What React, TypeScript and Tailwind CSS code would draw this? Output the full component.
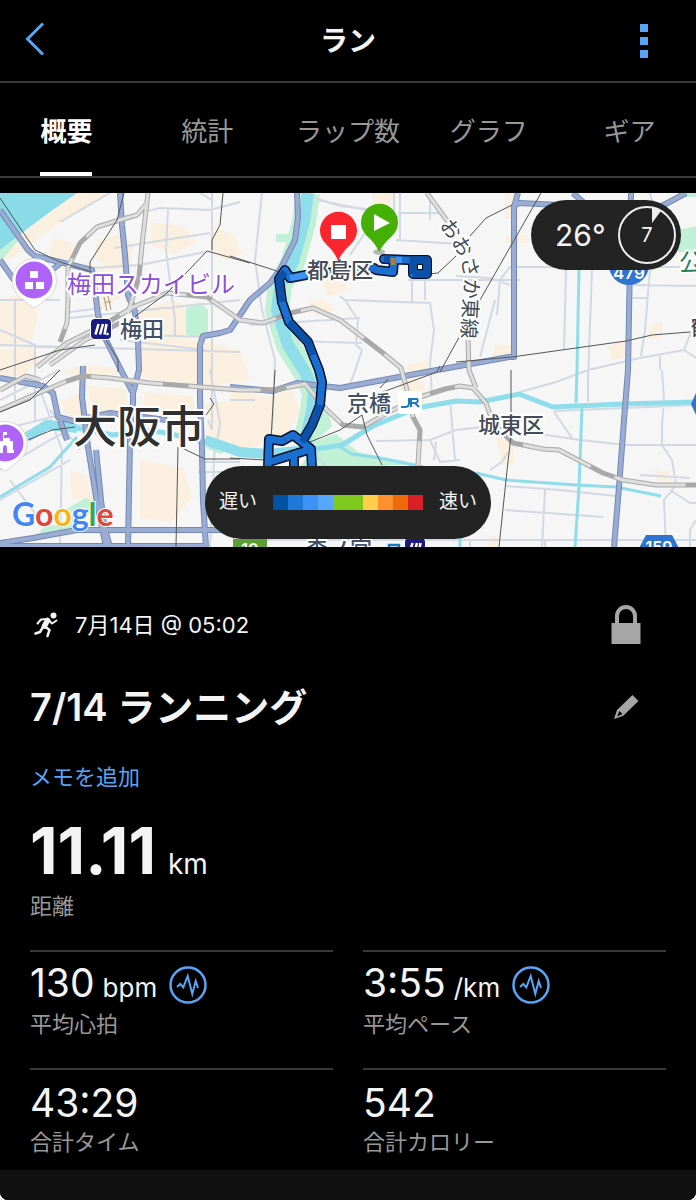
import { useState } from "react";

const TABS = ["概要", "統計", "ラップ数", "グラフ", "ギア"];

const PACE_COLORS = [
  "bg-[#0052a5]",
  "bg-[#1f78d8]",
  "bg-[#3d93f5]",
  "bg-[#56a7ff]",
  "bg-[#7fc91e]",
  "bg-[#7fc91e]",
  "bg-[#ffcf4b]",
  "bg-[#ff9030]",
  "bg-[#ef6a0c]",
  "bg-[#d92027]",
];

const STATS = [
  { value: "130", unit: "bpm", label: "平均心拍", chart: true },
  { value: "3:55", unit: "/km", label: "平均ペース", chart: true },
  { value: "43:29", label: "合計タイム" },
  { value: "542", label: "合計カロリー" },
];

// Map geometry, all in the map's own coordinates
const BEIGE = [
  "M77 193H108L60 222L15 256L0 262V250L15 238L50 212Z",
  "M98 240l22 -6l14 10l-4 24l-20 2l-16 -12Z",
  "M54 238l18 4l4 12l-16 8l-12 -6Z",
  "M84 262l26 8l12 26l-20 14l-16 -20Z",
  "M150 222l34 4l12 16l-20 12l-24 -8Z",
  "M212 225l22 10l8 18l-16 8l-14 -10Z",
  "M0 300l20 -6l18 20l-6 26l-32 8Z",
  "M140 310l34 -10l24 14l-10 30l-30 18l-20 -12Z",
  "M60 372l24 -8l30 4l6 6l-36 2Z",
  "M140 342l60 -2l40 10l10 30l-40 6l-68 -8Z",
  "M0 350l32 -4l8 14l-20 18l-20 2Z",
  "M60 400l22 -6l6 24l-22 -2Z",
  "M88 386l36 2l6 20l-38 4Z",
  "M144 392l50 4v18l-50 -6Z",
  "M140 460l44 8l8 30l-20 24l-32 -4Z",
  "M70 470l18 6l6 26l-22 -4Z",
  "M206 404l60 -8l10 26l-20 28l-46 -4Z",
  "M230 390l40 6l22 -6l8 20l-14 28l-50 10Z",
  "M320 276l24 -2l2 18l-18 4Z",
  "M308 302l16 -2l12 10l-20 6Z",
  "M372 193h22l-6 18l-14 -4Z",
  "M406 366l20 -6l6 12l-22 12Z",
  "M398 378l26 4l2 22l-22 2Z",
  "M505 193h14v26h-14Z",
  "M506 235h22v8h-22Z",
  "M496 344l18 2l-4 14l-18 -4Z",
  "M648 326l14 -4v14l-12 4Z",
  "M608 346l18 -6l4 16l-18 4Z",
  "M496 438l16 2l4 24l-14 2Z",
  "M654 468l14 4l6 10l-18 -2Z",
  "M488 538l10 -4v13h-10Z",
  "M8 425l20 6l-6 30l-22 -8Z",
];

const GREEN = [
  "M0 250L15 237L18 241L0 262Z",
  "M186 308l14 -6l8 8v22l-10 6l-12 -4Z",
  "M64 510l22 -12l14 6l-34 30l-32 6l10 -14l26 -2Z",
  "M276 234h22v8h-22Z",
  "M318 440l18 -6l22 18l60 12l-120 6Z",
  "M326 404l6 22l-22 20l-4 -8Z",
  "M680 193h16v4h-16Z",
  "M678 230l18 -4v26h-18Z",
  "M206 440l26 8l-12 6l-14 -6Z",
];

const STREETS = [
  "M60 222L110 193M0 300H60M70 318L240 300M15 300V400M0 330L35 345L35 420",
  "M125 217L160 208L210 210L240 202M115 248L165 240L210 233M92 268L140 265L205 252",
  "M212 193V430L208 420M168 210L166 250L175 320V335M140 335L212 337M70 312L102 308M120 340L205 350",
  "M0 400L60 370M40 390L62 450L60 547M0 470L50 440L90 420M0 500L70 460M10 480L40 520M50 410L80 450",
  "M210 370L220 423L216 450M200 462H240M198 472H240M230 400H255M0 430L60 415M200 193L212 200",
  "M262 193L255 260L262 310L275 360L272 430M340 296L345 300L430 303L434 330L430 362L432 395",
  "M345 300L358 320L356 345L362 350L350 385L340 390M295 340L325 342L362 343M365 233L350 255M394 193V212M396 240L460 244M400 193V240M412 260V303M425 275V300M430 193V220",
  "M398 213H440M300 193L340 206L375 210M318 200L400 217M408 280H520M380 232L366 235",
  "M497 315L500 280L510 267H680M456 276L490 278L510 285M566 270L564 350M592 270L588 380M560 238H585M480 357L495 300",
  "M650 193L656 215M634 285L696 286M633 298H648M650 270L645 330L641 356M588 370L640 358L684 350L696 358M660 356V370M684 350L696 320",
  "M520 392L556 382L588 370V402M554 412L572 438M456 430L500 425M540 434L580 440L626 445H696M554 411L696 405",
  "M662 370L664 400L662 425V445L672 460L676 485L664 500L666 547M506 486L560 490L616 496M505 510L603 517M545 490L542 547",
  "M490 470L502 462L508 452M640 475L690 478M670 490L690 503L696 503M690 547V530L696 520M376 441L430 440L456 430M430 440L440 462L460 460M450 400L455 460M436 442L434 460",
  "M300 440L330 470M250 540H696M215 440L210 547M470 540V547M545 547V540M0 345L240 352M250 325L360 318",
];

const HIGHWAYS = [
  "M0 210L28 250L35 256L68 264L92 270L95 290L98 315L106 340L122 372L133 393V403L130 440L128 547",
  "M120 193L122 225L125 255L128 295L135 312L138 340L139 370L133 393",
  "M83 366L82 397L88 447L97 503L106 547M96 450L101 500L104 525L110 547",
  "M0 260L14 280M52 270L62 262",
  "M297 193L298 217L295 240L280 270L270 283L250 300L230 330L220 333L203 336L200 345V400L202 450L203 500L206 547",
  "M0 378L43 386L53 393L58 417L73 421L110 413L167 420M60 420L67 440",
  "M0 543L33 538L77 530H240M0 546H206",
  "M230 387L273 391L297 383L340 388L437 370L509 357H514V207L518 193M514 206L519 203L560 205L660 207L686 193M573 193L583 202",
  "M631 193L630 260L628 370L624 420L619 487L614 547",
];

const RAILS = [
  "M148 193L142 245L139 277L128 313",
  "M147 203L137 215L113 222L97 227L80 243L68 267V300L67 323L60 342",
  "M37 367L67 343L107 323L133 307L167 293L207 297L240 320L263 323L290 313L313 308L340 320L383 353L401 368L407 390L413 417L420 430L418 465",
  "M50 365L85 340L120 323",
  "M0 410L27 398L67 381L83 376L110 378L150 383L240 390H275L305 384L327 410L343 425L363 427L387 413L417 398L445 389L460 386L473 388L486 403L493 423L513 443L543 449L559 450L603 473L623 480L656 485H696",
  "M0 390L26 376L40 380",
  "M427 193L448 222M468 340L469 370L476 388",
];

const LINES = [
  "M124 193L117 220L90 262V270M0 198L35 250L60 262L92 272M133 318L167 293L207 251L250 263",
  "M223 193L220 225L212 240V250M230 256L280 272M430 274L438 273L456 256M541 193L480 300L452 350L440 372",
  "M470 236L486 218L512 205M456 362L512 357L626 341L652 335L690 332M511 370V435L506 480L499 547",
  "M310 442L340 430L362 415L367 435L382 465M275 370L271 440M178 447L176 547M28 440L52 430L75 427M60 370L30 400L0 412",
  "M180 447L205 459H240M230 458L265 460M106 340L118 360V372M380 393L437 372L440 366M380 388L388 379",
  "M0 370L60 350L95 345M210 398L214 404L206 415",
];

const RIVER =
  "M308 193L304 222L293 262L280 285L277 310L288 345L305 372L314 392L312 412L304 445";

const WATER =
  "M27 437L47 425L77 428L113 435L143 430L167 433L213 444L240 452L268 454L308 450L342 445L373 426L417 408L456 401L480 402L519 394L553 407L623 404L696 402";

const CANALS = [
  "M0 497L50 467L77 437",
  "M340 447L352 454L380 458L424 467",
  "M476 473L506 480L576 485L616 487L661 496",
  "M579 270L577 370L576 403M582 408L579 487L575 547",
  "M460 530V547",
];

const ROUTE =
  "M384 259L408 260L427 260V274H413V260M394 260L393 272L376 270M374 268L306 275L290 278L285 270L279 279L282 302L289 322L308 342L313 355L319 370L322 382L320 405L312 425L302 442L293 435L282 441L269 439L268 468M302 442L311 449L312 468M269 462L308 450M294 458V466";

function Header() {
  return (
    <header className="flex h-[83px] items-center justify-between border-b-2 border-[#3a3a3a] px-6">
      <button aria-label="戻る" className="w-10 pb-1">
        <svg width="22" height="34" viewBox="0 0 22 34" fill="none" stroke="#56a5f7" strokeWidth="3">
          <path d="M19 1.500L3.500 17L19 32.500" />
        </svg>
      </button>
      <h1 className="text-[28px] font-bold leading-10">ラン</h1>
      <button aria-label="メニュー" className="flex w-10 flex-col items-center gap-[5px] pr-4">
        <span className="size-2 bg-[#56a5f7]" />
        <span className="size-2 bg-[#56a5f7]" />
        <span className="size-2 bg-[#56a5f7]" />
      </button>
    </header>
  );
}

function Tabs() {
  const [active, setActive] = useState(0);
  return (
    <nav className="overflow-hidden border-b-2 border-[#3a3a3a]">
      <div role="tablist" className="-mx-1 grid h-[93px] grid-cols-5 justify-items-center">
        {TABS.map((tab, i) => (
          <button
            key={tab}
            role="tab"
            aria-selected={i === active}
            onClick={() => setActive(i)}
            className={
              i === active
                ? "whitespace-nowrap border-b-4 border-white pt-2 text-[26px] font-bold text-white"
                : "whitespace-nowrap border-b-4 border-transparent pt-2 text-[26px] text-[#989898]"
            }
          >
            {tab}
          </button>
        ))}
      </div>
    </nav>
  );
}

function MetroMark({ x, y }: { x: number; y: number }) {
  return (
    <g transform={`translate(${x} ${y})`}>
      <rect x="-1" y="-1" width="22" height="22" rx="5" fill="#fff" />
      <rect width="20" height="20" rx="4" fill="#1a1a80" />
      <path d="M4.500 15.500L7.500 5M9 15.500L12 5M13.500 15.500L15.500 5" stroke="#fff" strokeWidth="2.600" fill="none" />
      <circle cx="16.500" cy="15" r="1.300" fill="#fff" />
    </g>
  );
}

function RouteMap() {
  return (
    <svg
      viewBox="0 193 696 354"
      preserveAspectRatio="xMidYMid slice"
      className="block h-[354px] w-full bg-[#f6f6f7]"
      fill="none"
      role="img"
      aria-label="ルートマップ"
    >
      <path d={BEIGE.join("")} fill="#fbf0df" />
      <path d={GREEN.join("")} fill="#c0f0d6" />
      <path d="M0 193H77L50 212L15 238L0 250Z" fill="#8adbe8" />
      <path d={RIVER} stroke="#c0f0d6" strokeWidth="24" />
      <path d={STREETS.join("")} stroke="#d3d9e2" strokeWidth="2" />
      <path d={RIVER} stroke="#8fdcea" strokeWidth="12" />
      <path d={WATER} stroke="#8fdcea" strokeWidth="5" />
      <path d="M27 437L47 425L77 428M205 440L240 452L268 454L308 450" stroke="#8fdcea" strokeWidth="10" />
      <path d={CANALS.join("")} stroke="#8fdcea" strokeWidth="3" />
      <path d={HIGHWAYS.join("")} stroke="#7188b8" strokeWidth="6" strokeLinejoin="round" />
      <path d={HIGHWAYS.join("")} stroke="#9bacd2" strokeWidth="4" strokeLinejoin="round" />
      <path d={RAILS.join("")} stroke="#a9a9a9" strokeWidth="5" strokeLinejoin="round" />
      <path d={RAILS.join("")} stroke="#dedede" strokeWidth="3" strokeDasharray="72 26" />
      <path d={LINES.join("")} stroke="#555" strokeWidth="1" />
      <path d="M104 297l3 14M108 296l3 14M105 302h6" stroke="#a59a80" />

      {/* recorded track */}
      <path d={ROUTE} stroke="#04122e" strokeWidth="10" strokeLinejoin="round" strokeLinecap="round" />
      <path d={ROUTE} stroke="#1a6fd0" strokeWidth="7" strokeLinejoin="round" strokeLinecap="round" />
      <path
        d="M285 272L279 279L282 302M289 322L308 342L313 355M320 405L312 425L302 442M413 274H427V260H413V274M384 259H390"
        stroke="#0c50a8"
        strokeWidth="7"
        strokeLinejoin="round"
      />
      <path d="M290 278L306 275M344 271H356M396 260H402" stroke="#3f94f2" strokeWidth="6" />
      <path d="M393 258V265" stroke="#8a8f50" strokeWidth="5" />
      <path d="M391 261H395" stroke="#e0603c" strokeWidth="3" />

      {/* road shields */}
      <circle cx="629" cy="265" r="20" fill="#2f74d0" />
      <path d="M638 550L646 535H672L680 550Z" fill="#2f74d0" />
      <path d="M691 404L696 393V415Z" fill="#2f74d0" />
      <rect x="233" y="539" width="34" height="10" fill="#5a9e34" />
      <g fill="#fff" fontFamily="Inter, sans-serif" fontWeight="600" textAnchor="middle">
        <text x="629" y="279" fontSize="17">479</text>
        <text x="659" y="553" fontSize="16">159</text>
        <text x="250" y="555" fontSize="16">10</text>
      </g>

      <g
        fontFamily="'Noto Sans CJK JP', sans-serif"
        fontSize="22"
        fill="#454c55"
        stroke="#fff"
        strokeWidth="4"
        strokeLinejoin="round"
        paintOrder="stroke"
      >
        <text x="120" y="337" fontWeight="500" fill="#3f5068">梅田</text>
        <text x="347" y="411" fontWeight="500" fill="#3f5068">京橋</text>
        <text x="478" y="433" fontWeight="500">城東区</text>
        <text x="307" y="278" fontWeight="500">都島区</text>
        <text x="306" y="557" fontWeight="500" fill="#3f5068">森ノ宮</text>
        <text x="67" y="293" fontSize="24" fill="#8b4fd9">梅田スカイビル</text>
        <text x="73" y="443" fontSize="44" fontWeight="500" fill="#303030">大阪市</text>
        <text x="679" y="271" fontSize="24" fill="#1d8254">公</text>
        <text x="691" y="335" fontWeight="500">鶴</text>
        <path id="osaka-higashi" d="M439 225C455 246 467 262 464 290L461 347" fill="none" stroke="none" />
        <text fontSize="20">
          <textPath href="#osaka-higashi">おおさか東線</textPath>
        </text>
      </g>

      <MetroMark x={91} y={319} />
      <MetroMark x={405} y={538} />
      <rect x="398" y="391" width="24" height="23" rx="3" fill="#fff" />
      <path d="M409 398V403Q409 407 405 407H401M411 407V399H417Q419 401 416 403H411M415 403L419 407" stroke="#1c78b8" strokeWidth="2" />
      <path d="M389 547V545H399V547" stroke="#1c78b8" strokeWidth="2.500" />

      {/* place markers */}
      <path d="M34 308Q28 305 24 300A22 22 0 1 1 45 300Q40 305 34 308Z" fill="#fff" stroke="#d8d8dc" strokeWidth="1" />
      <circle cx="34" cy="280" r="18.500" fill="#b063f8" />
      <path d="M30 271h8v7h-8ZM25 282h8v7h-8ZM36 282h8v7h-8Z" fill="#fff" />
      <path d="M5 471Q-1 468 -5 463A22 22 0 1 1 17 462Q11 468 5 471Z" fill="#fff" stroke="#d8d8dc" strokeWidth="1" />
      <circle cx="5" cy="443" r="18.500" fill="#b063f8" />
      <path d="M3 432H7V435H4V438H10V441H13V450H14V453H7V447Q5 443 3 447V453H-2V441H3Z" fill="#fff" />

      <ellipse cx="379" cy="252" rx="6" ry="3" fill="#000" opacity="0.25" />
      <path d="M338 261Q335 252 326 244A18.500 18.500 0 1 1 351 244Q342 252 338 261Z" fill="#fa262d" />
      <rect x="331" y="225" width="15" height="14" fill="#fff" />
      <path d="M379 252Q376 244 367 236A18.500 18.500 0 1 1 392 236Q383 244 379 252Z" fill="#45af06" />
      <path d="M374 214L390 223L374 231Z" fill="#fff" />

      <text
        x="12"
        y="526"
        fontFamily="Lato, sans-serif"
        fontSize="32"
        fontWeight="700"
        stroke="#fff"
        strokeWidth="2"
        paintOrder="stroke"
      >
        <tspan fill="#4285f4">G</tspan>
        <tspan fill="#e0483c">o</tspan>
        <tspan fill="#f4b614">o</tspan>
        <tspan fill="#4285f4">g</tspan>
        <tspan fill="#34a853">l</tspan>
        <tspan fill="#e0483c">e</tspan>
      </text>
    </svg>
  );
}

function WeatherPill() {
  return (
    <div className="absolute right-[15px] top-[7px] flex h-[70px] w-[150px] items-center justify-between rounded-full bg-[#232323] pl-6 pr-1">
      <span className="text-[30px] leading-9">26°</span>
      <span className="relative flex size-[60px] items-center justify-center text-[20px]">
        <svg className="absolute inset-0" width="60" height="60" viewBox="0 0 60 60">
          <circle cx="30" cy="30" r="28" fill="none" stroke="#eee" strokeWidth="2" />
          <path d="M35 2L44 6L35 18Z" fill="#eee" />
        </svg>
        7
      </span>
    </div>
  );
}

function PaceLegend() {
  return (
    <div className="absolute bottom-2 left-1/2 flex h-[73px] w-[286px] -translate-x-1/2 items-center justify-center gap-4 rounded-full bg-[#232323] text-[19px]">
      <span>遅い</span>
      <span className="flex">
        {PACE_COLORS.map((color, i) => (
          <span key={i} className={`h-[15px] w-[15px] ${color}`} />
        ))}
      </span>
      <span>速い</span>
    </div>
  );
}

function RunnerIcon() {
  return (
    <svg width="25" height="26" viewBox="0 0 25 26" fill="none" stroke="#f4f4f4" strokeLinecap="round" strokeLinejoin="round">
      <circle cx="19.500" cy="3.500" r="3" fill="#f4f4f4" stroke="none" />
      <path d="M13.500 8.500L10.500 14" strokeWidth="5.500" />
      <path d="M14 7L7 7.500L3.500 11.500M15 8.500L18 11.500L22.500 8.500" strokeWidth="2" />
      <path d="M11 14.500L15.500 18L13.500 24M9 15L6 20L1.500 21.500" strokeWidth="2.500" />
    </svg>
  );
}

function PulseIcon() {
  return (
    <svg className="shrink-0" width="38" height="38" viewBox="0 0 38 38" fill="none" stroke="#56a5f7">
      <circle cx="19" cy="19" r="17.500" strokeWidth="2.500" />
      <path d="M8 21L11.300 18L14.300 21.300L18.700 10L23.300 28L26.700 15L29 22" strokeWidth="2" />
    </svg>
  );
}

function Stat({ value, unit, label, chart }: (typeof STATS)[number]) {
  return (
    <div className="h-[118px] border-t-2 border-[#383838] pt-2">
      <div className="flex h-[50px] items-center gap-3">
        <p className="text-[39px] leading-[50px]">
          {value}
          {unit && <span className="ml-2 text-[26px]">{unit}</span>}
        </p>
        {chart && (
          <button aria-label={`${label}のグラフ`}>
            <PulseIcon />
          </button>
        )}
      </div>
      <p className="text-[22px] leading-7 text-[#989898]">{label}</p>
    </div>
  );
}

export default function App() {
  return (
    <div className="min-h-screen bg-white">
      <div className="overflow-hidden rounded-b-lg bg-black font-['Inter','Noto_Sans_CJK_JP',sans-serif] text-[#f4f4f4]">
        <Header />
        <Tabs />
        <section className="relative mt-[15px]">
          <RouteMap />
          <WeatherPill />
          <PaceLegend />
        </section>

        <main className="px-[30px] pt-14">
          <div className="flex h-11 items-center justify-between">
            <div className="flex items-center gap-4 pl-1">
              <RunnerIcon />
              <p className="text-[22px]">7月14日 @ 05:02</p>
            </div>
            <button aria-label="プライバシー" className="mr-6">
              <svg width="32" height="40" viewBox="0 0 32 40" fill="none">
                <path d="M7 19V11A9 9 0 0 1 25 11V19" stroke="#a6a6a6" strokeWidth="4" />
                <rect x="1.500" y="18" width="29" height="21" fill="#a6a6a6" />
              </svg>
            </button>
          </div>

          <div className="mt-8 flex h-14 items-center justify-between">
            <h2 className="text-[38px] font-semibold leading-[56px]">7/14 ランニング</h2>
            <button aria-label="名前を編集" className="mr-6">
              <svg width="32" height="32" viewBox="0 0 32 32">
                <path d="M22.500 4L28.500 10L13 25L4 28L7 19Z" fill="#a6a6a6" />
                <path d="M9.500 20L12.500 23L7 25.500Z" fill="#000" />
              </svg>
            </button>
          </div>

          <a href="#memo" className="mt-6 block text-[22px] leading-9 text-[#56a5f7]">
            メモを追加
          </a>

          <p className="mt-7 text-[64px] font-bold leading-[56px]">
            11.11<span className="ml-3 text-[28px] font-normal">km</span>
          </p>
          <p className="text-[22px] leading-7 text-[#989898]">距離</p>

          <div className="mt-[30px] grid grid-cols-2 gap-x-[30px]">
            {STATS.map((stat) => (
              <Stat key={stat.label} {...stat} />
            ))}
          </div>
        </main>
        <div className="-mt-4 h-[30px] bg-[#111]" />
      </div>
    </div>
  );
}
